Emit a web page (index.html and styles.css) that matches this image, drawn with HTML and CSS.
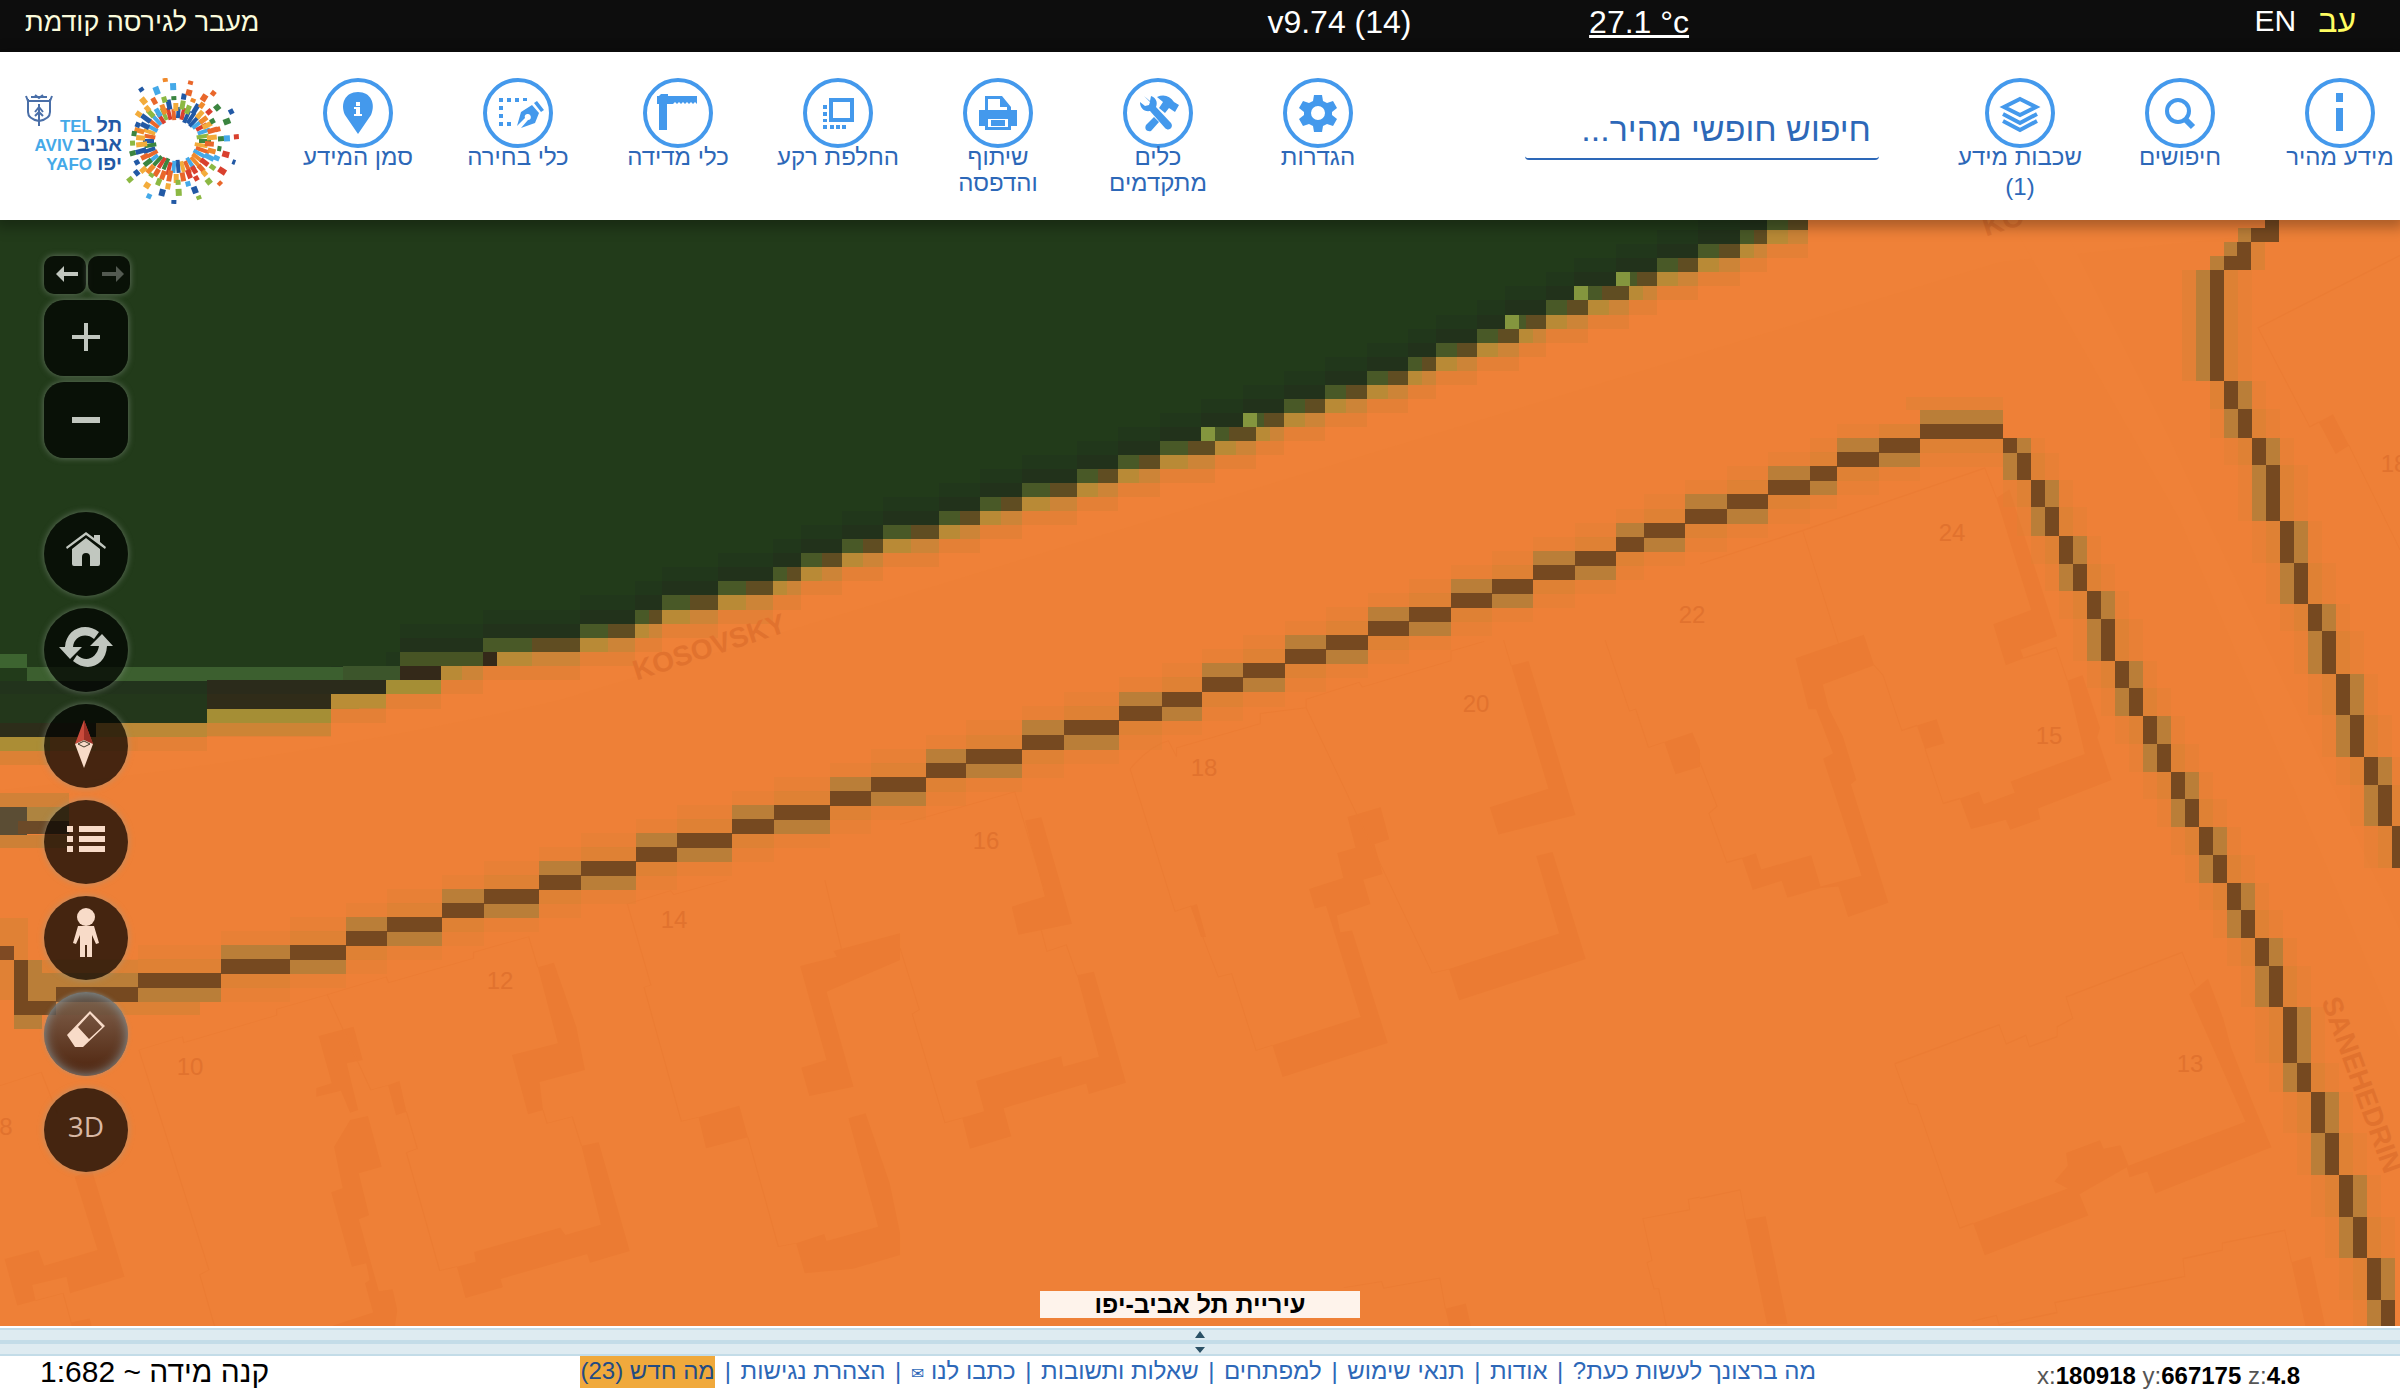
FILE: index.html
```html
<!DOCTYPE html>
<html lang="he" dir="rtl">
<head>
<meta charset="utf-8">
<title>מפת תל אביב-יפו</title>
<link rel="stylesheet" href="styles.css">
</head>
<body>
<div class="topbar" dir="ltr">
  <a class="old-version" href="#" dir="rtl">מעבר לגירסה קודמת</a>
  <span class="version">v9.74 (14)</span>
  <a class="temperature" href="#">27.1 °c</a>
  <div class="languages"><a href="#">EN</a><a class="current" href="#">עב</a></div>
</div>

<header class="header">
  <nav class="tools">
    <button class="tool"><svg viewBox="0 0 70 70"><circle class="ring" cx="35" cy="35" r="33"/><path d="M31 15h7v9h-7zM31 30h7v23h-7z"/></svg><span>מידע מהיר</span></button>
    <button class="tool"><svg viewBox="0 0 70 70"><circle class="ring" cx="35" cy="35" r="33"/><circle class="line" cx="33" cy="33" r="11"/><path class="line thick" d="M40 41l8 8"/></svg><span>חיפושים</span></button>
    <button class="tool"><svg viewBox="0 0 70 70"><circle class="ring" cx="35" cy="35" r="33"/><path class="line" d="M35 21L51 29 35 37 19 29z"/><path class="line" d="M18 36L35 45 52 36M18 43L35 52 52 43"/></svg><span>שכבות מידע</span><span class="count">(1)</span></button>
  </nav>
  <input class="search" type="text" placeholder="חיפוש חופשי מהיר..." aria-label="חיפוש חופשי מהיר">
  <nav class="tools">
    <button class="tool"><svg viewBox="0 0 70 70"><circle class="ring" cx="35" cy="35" r="33"/><path fill-rule="evenodd" d="M31 17h8l1 6 4 2 6-2 4 7-5 4v3l5 4-4 7-6-2-4 2-1 6h-8l-1-6-4-2-6 2-4-7 5-4v-3l-5-4 4-7 6 2 4-2zM35 28a7 7 0 1 0 0 14a7 7 0 1 0 0-14z"/></svg><span>הגדרות</span></button>
    <button class="tool"><svg viewBox="0 0 70 70"><circle class="ring" cx="35" cy="35" r="33"/><path d="M21 18l6 5 1-5c5 2 7 6 5 11l15 16c3 4-2 9-6 5L27 33c-6 1-10-3-10-9l5 4 4-1 1-3zM34 19c7-3 13-1 17 5l5 3-4 7-6-4-4 5-6-5 4-6zM31 39l5 5-8 9c-4 1-7-2-5-6z"/></svg><span>כלים<br>מתקדמים</span></button>
    <button class="tool"><svg viewBox="0 0 70 70"><circle class="ring" cx="35" cy="35" r="33"/><path fill-rule="evenodd" d="M22 18h17l9 11v7H22zM25 21v12h19v-4h-7v-8z"/><path fill-rule="evenodd" d="M16 32h38v16h-6v4H22v-4h-6zM25 41v8h20v-8zM28 42h14v6H28z"/></svg><span>שיתוף<br>והדפסה</span></button>
    <button class="tool"><svg viewBox="0 0 70 70"><circle class="ring" cx="35" cy="35" r="33"/><path class="line" d="M28 22h21v20H28z"/><path d="M20 27h4v4h-4zM20 34h4v4h-4zM20 41h4v3h-4zM20 47h4v4h-4zM27 47h4v4h-4zM33 47h4v4h-4zM39 47h4v4h-4z"/></svg><span>החלפת רקע</span></button>
    <button class="tool"><svg viewBox="0 0 70 70"><circle class="ring" cx="35" cy="35" r="33"/><path d="M18 16h7v2h29v8l-2-2-2 2-2-2-2 2-2-2-2 2-2-2-2 2-2-2-2 2-2-2-2 2h-6v26h-8V26h-2v-8h2z"/></svg><span>כלי מדידה</span></button>
    <button class="tool"><svg viewBox="0 0 70 70"><circle class="ring" cx="35" cy="35" r="33"/><path d="M16 20h4v4h-4zM24 20h4v4h-4zM32 20h4v4h-4zM40 20h4v3h-4zM16 28h4v4h-4zM16 36h4v4h-4zM16 44h4v4h-4zM24 44h4v4h-4z"/><path d="M34 48l4-14 11-7 7 8-4 10-14 5 7-8a3 3 0 1 0-3-2zM51 25l3-2 7 9-3 2z"/></svg><span>כלי בחירה</span></button>
    <button class="tool"><svg viewBox="0 0 70 70"><circle class="ring" cx="35" cy="35" r="33"/><path fill-rule="evenodd" d="M35 56L22 37C17 26 22 14 35 14S53 26 48 37zM33 24v4h4v-4zM31 29v2h2v5h-2v2h8v-2h-2v-7z"/></svg><span>סמן המידע</span></button>
  </nav>
  <svg class="logo" viewBox="24 78 224 126" role="img" aria-label="תל אביב יפו">
    <g class="crest"><path d="M28 99v13q0 7 11 9 11-2 11-9V99"/><path d="M26 96l2 5h22l2-5M31 97h16M35 95l4 3 4-3M39 104v22M35 112l4-5 4 5M35 116l4-4 4 4"/></g>
    <g class="burst"></g>
    <g class="logo-en"><text x="92" y="132">TEL</text><text x="73" y="151">AVIV</text><text x="92" y="170">YAFO</text></g>
    <g class="logo-he"><text x="122" y="132">תל</text><text x="122" y="151">אביב</text><text x="122" y="170">יפו</text></g>
  </svg>
</header>

<main class="map">
  <svg class="canvas" viewBox="0 220 2400 1106" preserveAspectRatio="xMinYMin slice">
    <rect class="residential" y="220" width="2400" height="1110"/>
    <path class="road" d="M0 790Q300 760 560 700L2000 262 2400 220V220H1800L800 560 400 690 0 760z"/>
    <path class="road" d="M2010 220L2180 520 2400 1040V930L2170 440 2060 220z"/>
    <g class="buildings">
      <g transform="translate(900 640) scale(.5102 .44)">
        <path d="M245 410L277 403 337 645 232 670 219 606 284 583zM347 762L380 754 443 1006 370 1032 365 1008 203 1064 218 1128 137 1156 122 1086 165 1071 149 1002 316 946 320 970 390 947zM570 605L582 600 600 675 590 675zM877 402L942 380 959 453 930 464 946 532 908 545 922 600 856 626 863 664 886 660 956 916 750 993 730 921 903 857 835 604 813 610 802 566 869 541 857 484 893 472zM1198 58L1232 48 1324 398 1173 442 1156 380 1271 338zM1247 491L1279 482 1344 725 1096 819 1076 748 1292 667zM1498 232L1553 210 1568 250V288L1520 305zM1069 1520L1109 1508 1120 1565H1078z"/>
        <path class="parcel" d="M0 419L225 345 287 583M277 660L288 708 326 693 347 762M0 700L38 840 24 850 88 1097 122 1086M451 293Q490 240 526 229L542 265V245L706 190V167L796 154 1043 757 1076 748M451 293L539 617 570 605 624 766 650 758 698 933 730 921M796 154V135L900 96 906 107 1080 47V25L1145 3M1183 0L1198 58M1382 0L1430 162 1442 157 1467 244 1498 232M1568 1266L1545 1271 1548 1295 1456 1315 1474 1410 1464 1415 1478 1475 1487 1474 1502 1560M870 1472L944 1458 948 1473 1058 1450 1069 1520"/>
      </g>
      <g transform="translate(0 880) scale(.574 .3333)">
        <path d="M555 468L616 440 632 540 604 550 624 690 610 698 594 632 551 650V624L578 610zM582 800L610 720 641 708 665 860 625 880 643 1006 625 1018 660 1234 684 1228 692 1290 688 1340H575L650 1298 636 1210 644 1200 638 1150 613 1160 577 937 597 925zM676 616L696 603 708 695 690 706zM937 262L965 248 1004 440 1019 570 940 606 946 690 920 703 892 525 972 490zM1013 798L1043 787 1097 1113 1028 1148 1023 1122 872 1197 876 1222 811 1254 796 1160 829 1145 826 1116 976 1043 985 1065 1047 1034zM1217 712L1288 677 1303 772 1230 805zM1394 258L1458 230 1452 213 1568 160V240L1440 335 1487 620 1410 648 1396 563 1440 540zM1478 715L1508 700 1550 910 1568 1060V1125L1486 1166 1402 1180 1387 1090 1436 1062 1440 1083 1530 1040zM130 890L160 870 217 1190 122 1240 116 1190 56 1215 62 1262 30 1277 8 1137 67 1110 77 1157 170 1110zM124 1328L156 1316 160 1340H126z"/>
        <path class="parcel" d="M0 617L72 577 100 700M242 510L318 470 320 488 482 406V388L570 344 646 630 676 616M242 510L364 1170 348 1184 374 1340M570 344L673 291 677 308 825 235V217L921 170 937 262M708 695L727 806 708 818 766 1172 796 1160M946 690L953 730 997 710 1013 798M1266 0L1174 44 1168 32 1093 72 1134 315 1122 322 1187 724 1217 712M1303 772L1356 1100 1387 1090M1437 0L1466 208M62 1262L110 1240 126 1340"/>
      </g>
      <g transform="translate(1700 220) scale(.4464 .709)">
        <path d="M664 392L693 380 800 587 718 606 725 618 685 628 657 570 742 550zM214 618L367 585 390 628 275 655 288 688 320 728 350 790 338 796 422 963 332 983 310 940 270 942 196 956 183 932 118 945 94 900 125 893 137 916 249 896 270 940 362 925 276 760 298 752 260 690 243 690zM486 713L530 704 548 738 504 746zM823 650L857 642 896 716 890 730 922 790 757 830 762 845 695 860 685 846 607 859 582 816 625 806 636 824 705 808 696 792 862 753zM1096 1092L1138 1070 1172 1126 1190 1168 1240 1248 1280 1308 1020 1373 1002 1342 962 1350 956 1336 850 1374 870 1404 638 1460 612 1415 824 1366 794 1356 824 1334 820 1316 896 1298 904 1310 942 1305 960 1334 1222 1272zM102 1410L147 1405 196 1557H150zM1325 1470L1368 1462 1402 1565H1358zM1386 285L1418 274 1454 318 1424 330z"/>
        <path class="parcel" d="M0 485L230 438 638 350 664 392M230 438L310 597M390 628L410 642 452 720 486 713M504 746L545 823 582 816M725 618L798 603 823 650M0 765L38 827 20 837 60 906 94 900M436 1190L670 1135 686 1162 730 1150 738 1166 800 1152V1138L835 1126 820 1096 1080 1033 1110 1080M436 1190L468 1246 486 1248 582 1422 612 1415M0 1380L90 1368 102 1410M610 1553L664 1545 670 1558 800 1541 795 1527 1086 1490 1082 1465 1170 1453V1443L1310 1425 1325 1470M1568 50L1250 152 1366 292 1386 285M1454 318L1568 465"/>
      </g>
    </g>
    <g class="cells" shape-rendering="crispEdges"></g>
    <g class="house-numbers">
      <text x="190" y="1075">10</text><text x="500" y="989">12</text><text x="674" y="928">14</text><text x="986" y="849">16</text><text x="1204" y="776">18</text><text x="1476" y="712">20</text><text x="1692" y="623">22</text><text x="1952" y="541">24</text><text x="2049" y="744">15</text><text x="2190" y="1072">13</text><text x="2394" y="472">18</text><text x="6" y="1135">8</text>
    </g>
    <g class="street-names">
      <text transform="translate(712 656) rotate(-18)">KOSOVSKY</text>
      <text transform="translate(2353 1088) rotate(70)">SANEHEDRIN</text>
      <text transform="translate(2006 230) rotate(-18)">KO</text>
    </g>
  </svg>

  <div class="controls" dir="ltr">
    <div class="history">
      <button aria-label="הקודם"><svg viewBox="0 0 42 38"><path d="M12 18l8-8v6h14v4H20v6z"/></svg></button>
      <button class="disabled" aria-label="הבא"><svg viewBox="0 0 42 38"><path d="M36 18l-8-8v6H14v4h14v6z"/></svg></button>
    </div>
    <button class="zoom" aria-label="התקרב"><svg viewBox="0 0 84 76"><path d="M28 35h12V23h4v12h12v4H44v12h-4V39H28z"/></svg></button>
    <button class="zoom" aria-label="התרחק"><svg viewBox="0 0 84 76"><path d="M28 35h28v6H28z"/></svg></button>
    <button class="round first" aria-label="בית"><svg viewBox="0 0 84 84"><path d="M22 35l20-15 8 6v-3h6v7l6 5-1 2-19-14-19 14z"/><path d="M28 37l14-11 14 11v15q0 2-2 2h-8V45q0-4-4-4t-4 4v9h-8q-2 0-2-2z"/></svg></button>
    <button class="round" aria-label="רענון"><svg viewBox="0 0 84 84"><path d="M15 39h6c1-18 20-26 34-15l-5 7c-8-7-20-3-21 8h9L26 51z"/><path d="M69 38h-6c-1 20-20 27-34 15l4-6c9 8 20 3 22-9h-9l12-12z"/></svg></button>
    <button class="round warm" aria-label="מצפן"><svg viewBox="0 0 84 84"><path fill="#c94a3b" d="M40 16l9 24-9-4-9 4z"/><path fill="#9c3026" d="M40 16l9 24-9-4z"/><path d="M31 40l9-4 9 4-9 24z"/><path fill="none" stroke="#463b2b" d="M34 40l6-3 6 3-6 3z"/></svg></button>
    <button class="round warm" aria-label="מקרא"><svg viewBox="0 0 84 84"><path d="M23 26h6v6h-6zM35 26h26v6H35zM23 36h6v6h-6zM35 36h26v6H35zM23 46h6v6h-6zM35 46h26v6H35z"/></svg></button>
    <button class="round warm" aria-label="מבט רחוב"><svg viewBox="0 0 84 84"><circle cx="42" cy="21" r="9"/><path d="M34 30h16l5 17-3 1-4-9v22h-5V49h-2v12h-5V39l-4 9-3-1z"/></svg></button>
    <button class="round warm active" aria-label="מחק"><svg viewBox="0 0 84 84"><path fill-rule="evenodd" d="M46 19l15 15-22 21h-8L23 43zM46 22L34 35l11 12 13-12z"/></svg></button>
    <button class="round label">3D</button>
  </div>
  <div class="municipality">עיריית תל אביב-יפו</div>
</main>

<div class="splitter"><svg viewBox="0 0 12 28"><path d="M1 10l5-7 5 7zM1 19l5 6 5-6z"/></svg></div>

<footer class="footer" dir="ltr">
  <span class="scale" dir="rtl">קנה מידה ~ 1:682</span>
  <nav class="links" dir="rtl">
    <a href="#">מה ברצונך לעשות כעת?</a><i>|</i><a href="#">אודות</a><i>|</i><a href="#">תנאי שימוש</a><i>|</i><a href="#">למפתחים</a><i>|</i><a href="#">שאלות ותשובות</a><i>|</i><a href="#">כתבו לנו <span class="mail">✉</span></a><i>|</i><a href="#">הצהרת נגישות</a><i>|</i><a class="new" href="#">מה חדש (23)</a>
  </nav>
  <span class="coordinates">x:<b>180918</b> y:<b>667175</b> z:<b>4.8</b></span>
</footer>
<script src="map.js"></script>
</body>
</html>
```
FILE: styles.css
```css
* { box-sizing: border-box; }
body {
  margin: 0;
  min-height: 100vh;
  display: flex;
  flex-direction: column;
  font-family: "Liberation Sans", "DejaVu Sans", sans-serif;
  background: #fff;
  overflow-x: hidden;
}
a { text-decoration: none; color: inherit; }
button { border: 0; padding: 0; margin: 0; background: none; font: inherit; color: inherit; cursor: pointer; }

.topbar {
  height: 52px;
  padding: 0 44px 0 25px;
  display: grid;
  grid-template-columns: 53.3% 13.8% 1fr auto;
  align-items: start;
  background: #0d0d0d;
  color: #fff;
  font-size: 32px;
  line-height: 44px;
  white-space: nowrap;
}
.old-version { justify-self: start; color: #fbfbdc; font-size: 27px; }
.temperature { justify-self: start; text-decoration: underline; }
.languages { display: flex; gap: 22px; font-size: 30px; line-height: 42px; }
.languages .current { color: #fffd60; font-size: 32px; }

.header {
  position: relative;
  z-index: 2;
  height: 168px;
  padding: 26px 0 0 24px;
  display: flex;
  align-items: flex-start;
  background: #fff;
  box-shadow: 0 4px 12px 4px rgba(0, 0, 0, .28);
}
.tools { display: flex; gap: 40px; flex: none; }
.tool {
  width: 120px;
  display: flex;
  flex-direction: column;
  align-items: center;
  color: #2d68b8;
  font-size: 24px;
  line-height: 26px;
  white-space: nowrap;
}
.tool svg { width: 70px; height: 70px; margin-bottom: -4px; fill: #4499ec; }
.tool .ring { fill: none; stroke: #4499ec; stroke-width: 4; }
.tool .line { fill: none; stroke: #4499ec; stroke-width: 4; }
.tool .thick { stroke-width: 6; }
.count { padding-top: 4px; }
.search {
  flex: 1;
  min-width: 0;
  height: 82px;
  margin: 0 81px 0 147px;
  padding: 22px 8px 0;
  border: 0;
  border-bottom: 2px solid #2d68b8;
  border-radius: 4px;
  background: none;
  font: 34px "Liberation Sans", sans-serif;
  color: #2d68b8;
}
.search::placeholder { color: #2d68b8; opacity: 1; }
.logo { width: 224px; height: 126px; margin-right: 50px; flex: none; direction: ltr; }
.logo text { font: bold 17px "Liberation Sans", sans-serif; text-anchor: end; }
.logo .logo-he text { font-size: 20px; }
.logo-en { fill: #45a9e8; }
.logo-he { fill: #2259a5; }
.crest { fill: none; stroke: #4a6fa8; stroke-width: 2; }

.map { position: relative; flex: 1; min-height: 980px; overflow: hidden; background: #ee8037; }
.canvas { position: absolute; inset: 0; width: 100%; height: 100%; }
.residential { fill: #ee8037; }
.road { fill: #ef8138; }
.buildings { fill: #eb7b33; }
.parcel { fill: none; stroke: #eb7c34; stroke-width: 2; }
.house-numbers, .street-names { fill: #e1722e; font-family: "Liberation Sans", sans-serif; text-anchor: middle; }
.house-numbers { font-size: 24px; }
.street-names { font-size: 28px; font-weight: bold; }

.controls { position: absolute; left: 44px; top: 36px; display: flex; flex-direction: column; align-items: flex-start; }
.controls button {
  display: block;
  overflow: hidden;
  background: rgba(0, 0, 0, .71);
  box-shadow: 0 0 6px rgba(150, 160, 150, .6);
}
.controls svg { display: block; width: 100%; height: 100%; fill: #c1c7bf; }
.controls .warm svg { fill: #f8dbc8; }
.history { display: flex; gap: 2px; }
.history button { width: 42px; height: 38px; border-radius: 10px; }
.history .disabled svg { opacity: .4; }
.controls .zoom { width: 84px; height: 76px; margin-top: 6px; border-radius: 20px; }
.controls .round { width: 84px; height: 84px; margin-top: 12px; border-radius: 50%; }
.controls .first { margin-top: 54px; }
.controls .active {
  background: linear-gradient(rgba(90, 90, 90, .72), rgba(60, 25, 8, .9));
  box-shadow: inset 0 0 12px #8b9ba0, 0 0 4px rgba(150, 160, 160, .6);
}
.controls .label { padding-bottom: 8px; color: #d9b8a4; font: 500 28px "Open Sans", sans-serif; }

.municipality {
  position: absolute;
  left: 50%;
  bottom: 8px;
  width: 320px;
  margin-left: -160px;
  background: rgba(255, 255, 255, .9);
  text-align: center;
  font-size: 25px;
  font-weight: bold;
  line-height: 27px;
}
.splitter {
  height: 30px;
  border-top: 2px solid #fff;
  background: linear-gradient(#c3dce8 2px, #deebf1 2px 12px, #c3dce8 12px 16px, #deebf1 16px 26px, #c3dce8 26px);
  text-align: center;
  line-height: 0;
}
.splitter svg { width: 12px; height: 28px; fill: #2c5166; }

.footer {
  height: 36px;
  display: grid;
  grid-template-columns: 580px minmax(0, 1236fr) 584fr;
  align-items: start;
  white-space: nowrap;
  line-height: 32px;
}
.scale { justify-self: start; padding-left: 40px; font-size: 30px; }
.links { display: flex; justify-content: space-between; color: #2d68b8; font-size: 24px; line-height: 30px; }
.links i { font-style: normal; }
.links .new { width: 135px; height: 32px; background: #f0a93c; color: #234b83; text-align: center; }
.mail { font-size: 16px; }
.coordinates { justify-self: end; padding: 4px 100px 0 0; font-size: 24px; color: #555; }
.coordinates b { color: #000; }
```
FILE: map.js
```js
const NS = 'http://www.w3.org/2000/svg';
const CELL = 14;

function rect(parent, x0, y0, x1, y1, fill, opacity) {
  if (x1 <= x0 || y1 <= y0) return;
  const r = document.createElementNS(NS, 'rect');
  r.setAttribute('x', x0);
  r.setAttribute('y', y0);
  r.setAttribute('width', x1 - x0);
  r.setAttribute('height', y1 - y0);
  r.setAttribute('fill', fill);
  if (opacity) r.setAttribute('opacity', opacity);
  parent.appendChild(r);
}

const cells = document.querySelector('.cells');
const GREEN = '#223b1a', LIGHT = '#dc8135', TAN = '#ba7e38', DARK = '#764920';

// Park edge, one entry per raster row from the top: y, start and end of the mixed cells.
const edge = [
  [216, 1767, 1808], [230, 1740, 1767], [244, 1698, 1740], [258, 1657, 1698], [272, 1616, 1657, 1],
  [286, 1574, 1629, 1], [300, 1546, 1588], [315, 1505, 1546, 1], [329, 1477, 1519], [343, 1436, 1477],
  [357, 1408, 1436], [371, 1367, 1408], [385, 1325, 1367], [399, 1284, 1325], [413, 1243, 1284, 1],
  [427, 1201, 1256, 1], [441, 1160, 1215], [455, 1118, 1160], [469, 1077, 1118], [483, 1022, 1077],
  [497, 980, 1022], [511, 939, 980], [525, 883, 939], [539, 842, 883], [553, 801, 842],
  [567, 773, 801], [581, 718, 773], [595, 662, 718], [610, 635, 662], [624, 580, 635],
  [638, 483, 580], [652, 400, 483], [666, 400, 441], [680, 386, 386], [694, 331, 331],
  [709, 207, 207], [723, 96, 96], [737, 0, 0]
];
edge.forEach(([y, a, b, bright], i) => {
  const below = edge[i + 1] || [751, 0, 0];
  const below2 = edge[i + 2] || [765, 0, 0];
  const above = edge[Math.max(0, i - 1)], above2 = edge[Math.max(0, i - 2)];
  const bottom = below[0];
  rect(cells, 0, y, a, bottom, GREEN);
  rect(cells, Math.max(0, below2[1]), y, a, bottom, '#21371b');
  rect(cells, Math.max(0, below[1]), y, a, bottom, '#22321b');
  const mid = a + Math.round((b - a) / 2);
  rect(cells, a, y, mid, bottom, '#495927');
  rect(cells, mid, y, b, bottom, '#604d22');
  if (bright) rect(cells, a, y, a + CELL, bottom, '#84963e');
  const c = Math.max(b, above[2]), d = Math.max(c, above2[2]);
  rect(cells, b, y, b + (c - b) / 2, bottom, '#b98a36');
  rect(cells, b + (c - b) / 2, y, c, bottom, '#cd8437');
  rect(cells, c, y, d, bottom, LIGHT, .6);
});
// Path inside the park and its soft lower rim.
rect(cells, 0, 654, 27, 668, '#3d6430');
rect(cells, 27, 667, 343, 681, '#3c5f2f');
rect(cells, 343, 666, 400, 680, '#3c552b');
rect(cells, 400, 652, 483, 666, '#475424');
rect(cells, 400, 666, 441, 680, '#342919');
rect(cells, 483, 652, 497, 666, '#342919');
rect(cells, 0, 681, 207, 694, '#22331c');
rect(cells, 0, 694, 207, 723, '#23371b');
rect(cells, 207, 680, 386, 694, '#2b2b1b');
rect(cells, 207, 694, 331, 709, '#302c19');
rect(cells, 207, 709, 331, 723, '#a58e35');
rect(cells, 331, 694, 386, 708, '#ba8d36');
rect(cells, 386, 680, 441, 694, '#a58e35');
rect(cells, 96, 723, 207, 737, '#bb8836');
rect(cells, 207, 723, 331, 736, '#cd8435');
rect(cells, 0, 723, 96, 737, '#2d2d1a');
rect(cells, 0, 737, 50, 751, '#ab8d35');
rect(cells, 50, 737, 138, 751, LIGHT, .3);
rect(cells, 0, 751, 50, 765, LIGHT);

// Lot outline, rising part: y, start, end.
const rising = [
  [987, 56, 138], [973, 138, 221], [959, 221, 290], [945, 290, 346], [931, 346, 387], [917, 387, 442],
  [903, 442, 484], [889, 484, 539], [875, 539, 581], [861, 581, 636], [847, 636, 677], [833, 677, 732],
  [819, 732, 774], [805, 774, 830], [791, 830, 871], [777, 871, 926], [763, 926, 966], [749, 966, 1022],
  [735, 1022, 1064], [720, 1064, 1119], [706, 1119, 1162], [692, 1162, 1202], [677, 1202, 1243],
  [663, 1243, 1285], [649, 1285, 1326], [635, 1326, 1368], [621, 1368, 1409], [607, 1409, 1451],
  [593, 1451, 1492], [579, 1492, 1533], [565, 1533, 1575], [551, 1575, 1616], [537, 1616, 1644],
  [523, 1644, 1685], [509, 1685, 1727], [494, 1727, 1768], [480, 1768, 1810], [466, 1810, 1837],
  [452, 1837, 1879], [438, 1879, 1920], [424, 1920, 2003]
];
// Falling parts: x, top, bottom.
const ys = [438, 453, 480, 507, 536, 564, 591, 619, 661, 688, 716, 744, 772, 799, 827, 855, 883, 910, 938, 966, 1007, 1063, 1092, 1133, 1175, 1217, 1258, 1300, 1330];
const falling = ys.slice(0, -1).map((y, i) => [2003 + CELL * i, y, ys[i + 1]]);
const east = [
  [2210, 270, 381], [2224, 381, 409], [2238, 409, 438], [2252, 438, 465], [2266, 465, 521], [2280, 521, 563],
  [2294, 563, 604], [2308, 604, 631], [2322, 631, 674], [2336, 674, 715], [2350, 715, 757], [2364, 757, 785],
  [2378, 785, 826], [2392, 826, 868]
];

function line(runs, vertical, firstPair) {
  const put = (p, a, b, fill, o) => vertical
    ? rect(cells, p, a, p + CELL, b, fill, o)
    : rect(cells, a, p, b, p + CELL + 1, fill, o);
  runs.forEach(([p], i) => {
    const at = k => runs[Math.min(runs.length - 1, Math.max(0, k))];
    put(p, at(i - 2)[1], at(i + 2)[2], LIGHT, .3);
    put(p, at(i - 1)[1], at(i + 1)[2], LIGHT, .8);
  });
  for (let i = firstPair; i + 1 < runs.length; i += 2) {
    const [p, a, b] = runs[i], [q, c, d] = runs[i + 1];
    put(q, a, b, TAN);
    put(p, c, d, TAN);
  }
  runs.forEach(([p, a, b]) => put(p, a, b, DARK));
}
rect(cells, 1906, 397, 2003, 410, LIGHT, .5);
rect(cells, 1920, 410, 2003, 424, TAN);
rect(cells, 28, 960, 138, 973, LIGHT);
rect(cells, 28, 1001, 200, 1015, LIGHT);
line(rising, false, 0);
line(falling, true, 0);
rect(cells, 2182, 270, 2196, 381, LIGHT, .6);
rect(cells, 2196, 270, 2210, 381, TAN);
rect(cells, 2224, 270, 2238, 381, LIGHT, .8);
rect(cells, 2210, 256, 2224, 270, TAN);
rect(cells, 2224, 242, 2238, 256, TAN);
rect(cells, 2238, 228, 2251, 242, TAN);
rect(cells, 2251, 242, 2265, 270, LIGHT);
line(east, true, 1);
rect(cells, 2224, 256, 2251, 270, DARK);
rect(cells, 2237, 242, 2251, 270, DARK);
rect(cells, 2251, 228, 2279, 242, DARK);
rect(cells, 2265, 216, 2279, 242, DARK);

// Western corner.
rect(cells, 0, 918, 28, 1000, LIGHT, .8);
rect(cells, 14, 1015, 42, 1029, TAN);
rect(cells, 28, 960, 42, 1001, TAN);
rect(cells, 42, 973, 138, 987, TAN);
rect(cells, 42, 987, 56, 1001, TAN);
rect(cells, 0, 946, 14, 960, '#7f4a23');
rect(cells, 14, 960, 28, 1015, DARK);
rect(cells, 28, 1001, 56, 1015, DARK);
rect(cells, 56, 987, 138, 1001, DARK);
rect(cells, 0, 793, 69, 807, '#d18137');
rect(cells, 27, 807, 69, 821, '#ae8440');
rect(cells, 0, 835, 69, 848, '#cd8036');
rect(cells, 0, 807, 27, 835, '#5b4d34');
rect(cells, 18, 821, 69, 834, '#6c4a28');

// Mosaic sun of the city logo.
const burst = document.querySelector('.burst');
const colours = ['#2259a5', '#e9672b', '#3b8540', '#f3ac3b', '#45a9e8', '#8cb843', '#d9402e', '#f08a2c'];
const noise = n => Math.abs(Math.sin(n * 12.9898) * 43758.5453) % 1;
const rings = [
  { r: 19, len: 14, count: 38, w: 4 },
  { r: 29, len: 11, count: 34, w: 5 },
  { r: 39, len: 7, count: 28, w: 5 },
  { r: 47, len: 8, count: 20, w: 6 },
  { r: 57, len: 6, count: 15, w: 5 }
];
rings.forEach(({ r, len, count, w }, ring) => {
  for (let i = 0; i < count; i++) {
    const n = ring * 100 + i + 1;
    const a = 360 * i / count + ring * 5;
    if (ring > 2 && a > 145 && a < 215) continue;
    const s = document.createElementNS(NS, 'rect');
    s.setAttribute('x', r + Math.round(noise(n) * 4));
    s.setAttribute('y', -w / 2);
    s.setAttribute('width', len - Math.round(noise(n + 7) * 3));
    s.setAttribute('height', w);
    s.setAttribute('fill', colours[Math.floor(noise(n + 31) * colours.length)]);
    s.setAttribute('transform', `translate(176 141) rotate(${a})`);
    burst.appendChild(s);
  }
});
```
